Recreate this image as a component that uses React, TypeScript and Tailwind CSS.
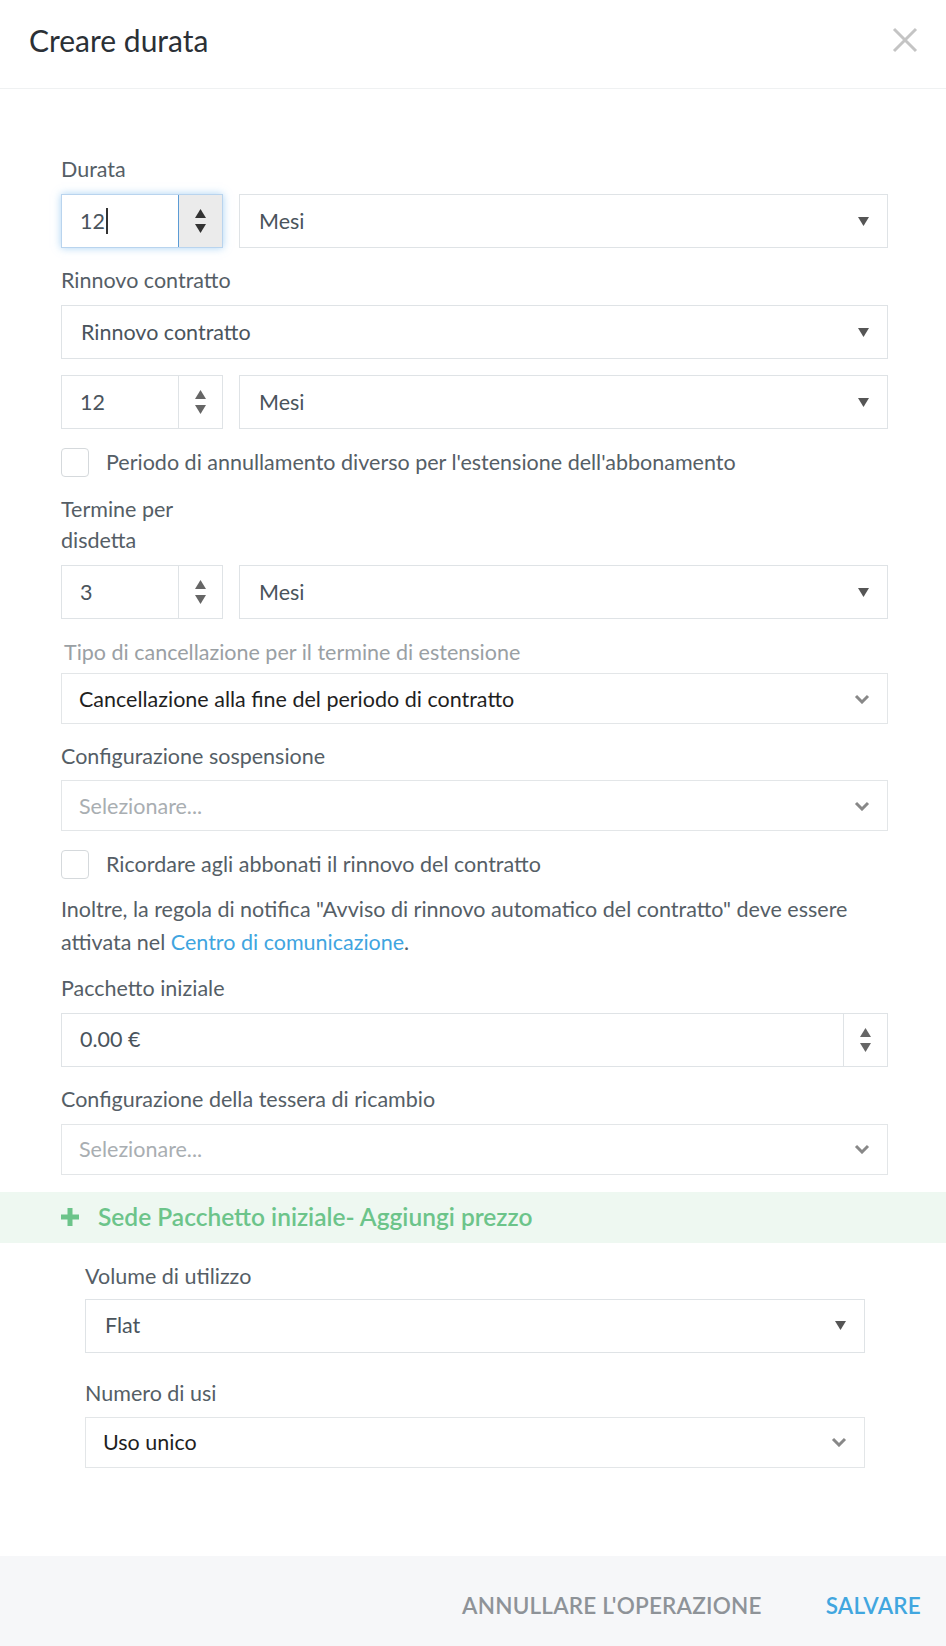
import React from "react";

const font = { fontFamily: "Lato, 'Noto Sans', sans-serif" };

function Spinner({ focused = false }: { focused?: boolean }) {
    return (
        <div
            className={`flex w-[44px] flex-col items-center justify-center gap-[6px] border-l ${
                focused ? "border-[#5b9bd5] bg-[#ebebeb]" : "border-[#dfe3e6]"
            }`}
        >
            <svg width="11" height="9" viewBox="0 0 11 9">
                <path d="M5.5 0 L11 9 L0 9 Z" fill={focused ? "#333" : "#666"} />
            </svg>
            <svg width="11" height="9" viewBox="0 0 11 9">
                <path d="M0 0 L11 0 L5.5 9 Z" fill={focused ? "#333" : "#666"} />
            </svg>
        </div>
    );
}

function NumberInput({ value, focused = false }: { value: string; focused?: boolean }) {
    return (
        <div
            className={`flex h-[54px] w-[162px] shrink-0 border ${
                focused ? "border-[#b9d4ee] shadow-[0_0_8px_rgba(102,175,233,0.55)]" : "border-[#dfe3e6]"
            }`}
        >
            <div className="flex flex-1 items-center pl-[18px] text-[21.5px] text-[#4a545c]">
                {value}
                {focused && <span className="ml-[1px] inline-block h-[26px] w-[2px] bg-[#333]" />}
            </div>
            <Spinner focused={focused} />
        </div>
    );
}

function Caret() {
    return (
        <svg width="11" height="9" viewBox="0 0 11 9">
            <path d="M0 0 L11 0 L5.5 9 Z" fill="#555" />
        </svg>
    );
}

function Chevron() {
    return (
        <svg width="16" height="10" viewBox="0 0 16 10">
            <path d="M2 2 L8 8 L14 2" stroke="#888" strokeWidth="3" fill="none" />
        </svg>
    );
}

function NativeSelect({ value, className = "" }: { value: string; className?: string }) {
    return (
        <div
            className={`flex h-[54px] items-center justify-between border border-[#dfe3e6] pl-[19px] pr-[18px] text-[21.5px] text-[#4a545c] ${className}`}
        >
            <span>{value}</span>
            <Caret />
        </div>
    );
}

function ChoiceSelect({ value, placeholder = false }: { value: string; placeholder?: boolean }) {
    return (
        <div className="flex h-[51px] items-center justify-between border border-[#e3e6e8] pl-[17px] pr-[17px] text-[21.5px]">
            <span className={placeholder ? "text-[#a9aeb2]" : "text-[#1f1f1f]"}>{value}</span>
            <Chevron />
        </div>
    );
}

function Label({ children, light = false }: { children: React.ReactNode; light?: boolean }) {
    return (
        <div className={`text-[21.5px] leading-[31px] ${light ? "pl-[3px] text-[#9aa0a4]" : "text-[#555e66]"}`}>
            {children}
        </div>
    );
}

function Checkbox({ label }: { label: string }) {
    return (
        <div className="flex items-center gap-[17px]">
            <div className="h-[29px] w-[28px] rounded-[4px] border border-[#d5d9dc] bg-white" />
            <span className="text-[21.5px] text-[#555e66]">{label}</span>
        </div>
    );
}

export default function App() {
    return (
        <div className="flex h-[1646px] w-[946px] flex-col bg-white" style={font}>
            <div className="flex h-[89px] shrink-0 items-center justify-between border-b border-[#eff1f2] pb-[8px] pl-[29px] pr-[28px]">
                <h1 className="text-[30px] text-[#2b3036]">Creare durata</h1>
                <svg width="26" height="26" viewBox="0 0 26 26">
                    <path d="M2 2 L24 24 M24 2 L2 24" stroke="#c4c4c4" strokeWidth="3" />
                </svg>
            </div>

            <div className="flex-1">
                <div className="flex flex-col px-[61px] pr-[58px] pt-[65px]">
                    <Label>Durata</Label>
                    <div className="mt-[9px] flex gap-[16px]">
                        <NumberInput value="12" focused />
                        <NativeSelect value="Mesi" className="flex-1" />
                    </div>

                    <div className="mt-[17px]">
                        <Label>Rinnovo contratto</Label>
                    </div>
                    <NativeSelect value="Rinnovo contratto" className="mt-[9px]" />
                    <div className="mt-[16px] flex gap-[16px]">
                        <NumberInput value="12" />
                        <NativeSelect value="Mesi" className="flex-1" />
                    </div>

                    <div className="mt-[17px]">
                        <Checkbox label="Periodo di annullamento diverso per l'estensione dell'abbonamento" />
                    </div>

                    <div className="mt-[16px] w-[140px]">
                        <Label>Termine per disdetta</Label>
                    </div>
                    <div className="mt-[9px] flex gap-[16px]">
                        <NumberInput value="3" />
                        <NativeSelect value="Mesi" className="flex-1" />
                    </div>

                    <div className="mt-[18px]">
                        <Label light>Tipo di cancellazione per il termine di estensione</Label>
                    </div>
                    <div className="mt-[5px]">
                        <ChoiceSelect value="Cancellazione alla fine del periodo di contratto" />
                    </div>

                    <div className="mt-[17px]">
                        <Label>Configurazione sospensione</Label>
                    </div>
                    <div className="mt-[8px]">
                        <ChoiceSelect value="Selezionare..." placeholder />
                    </div>

                    <div className="mt-[17px]">
                        <Checkbox label="Ricordare agli abbonati il rinnovo del contratto" />
                    </div>

                    <p className="mt-[12px] text-[21.5px] leading-[33px] text-[#555e66]">
                        Inoltre, la regola di notifica "Avviso di rinnovo automatico del contratto" deve essere attivata nel{" "}
                        <a className="text-[#3fa5e0]">Centro di comunicazione</a>.
                    </p>

                    <div className="mt-[14px]">
                        <Label>Pacchetto iniziale</Label>
                    </div>
                    <div className="mt-[9px] flex h-[54px] border border-[#dfe3e6]">
                        <div className="flex flex-1 items-center pl-[18px] text-[21.5px] text-[#4a545c]">0.00 €</div>
                        <Spinner />
                    </div>

                    <div className="mt-[17px]">
                        <Label>Configurazione della tessera di ricambio</Label>
                    </div>
                    <div className="mt-[9px]">
                        <ChoiceSelect value="Selezionare..." placeholder />
                    </div>
                </div>

                <div className="mt-[17px] flex h-[51px] items-center gap-[18px] bg-[#eef8f1] pl-[60px]">
                    <svg width="20" height="20" viewBox="0 0 20 20">
                        <path d="M10 1 V19 M1 10 H19" stroke="#6cc48a" strokeWidth="5" />
                    </svg>
                    <span className="text-[24.5px] font-semibold text-[#6cc48a]">Sede Pacchetto iniziale- Aggiungi prezzo</span>
                </div>

                <div className="flex flex-col pl-[85px] pr-[81px] pt-[18px]">
                    <Label>Volume di utilizzo</Label>
                    <NativeSelect value="Flat" className="mt-[7px]" />
                    <div className="mt-[25px]">
                        <Label>Numero di usi</Label>
                    </div>
                    <div className="mt-[8px]">
                        <ChoiceSelect value="Uso unico" />
                    </div>
                </div>
            </div>

            <div className="flex h-[90px] shrink-0 items-center justify-end gap-[64px] bg-[#f6f7f9] pr-[25px] pt-[10px]">
                <button className="text-[22.5px] font-semibold tracking-[0.2px] text-[#8e9398]">ANNULLARE L'OPERAZIONE</button>
                <button className="text-[22.5px] font-semibold tracking-[0.2px] text-[#41a6df]">SALVARE</button>
            </div>
        </div>
    );
}
